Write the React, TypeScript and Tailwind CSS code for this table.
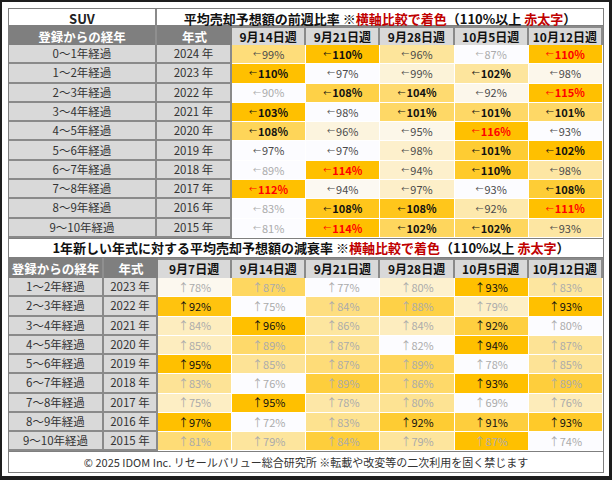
import React from "react";

type Row = { age: string; year: string; vals: number[]; red?: number[] };

const TOP_WEEKS = ["9月14日週", "9月21日週", "9月28日週", "10月5日週", "10月12日週"];
const BOTTOM_WEEKS = ["9月7日週", ...TOP_WEEKS];

const topRows: Row[] = [
  { age: "0～1年経過", year: "2024 年", vals: [99, 110, 96, 87, 110], red: [4] },
  { age: "1～2年経過", year: "2023 年", vals: [110, 97, 99, 102, 98] },
  { age: "2～3年経過", year: "2022 年", vals: [90, 108, 104, 92, 115], red: [4] },
  { age: "3～4年経過", year: "2021 年", vals: [103, 98, 101, 101, 101] },
  { age: "4～5年経過", year: "2020 年", vals: [108, 96, 95, 116, 93], red: [3] },
  { age: "5～6年経過", year: "2019 年", vals: [97, 97, 98, 101, 102] },
  { age: "6～7年経過", year: "2018 年", vals: [89, 114, 94, 110, 98], red: [1] },
  { age: "7～8年経過", year: "2017 年", vals: [112, 94, 97, 93, 108], red: [0] },
  { age: "8～9年経過", year: "2016 年", vals: [83, 108, 108, 92, 111], red: [4] },
  { age: "9～10年経過", year: "2015 年", vals: [81, 114, 102, 102, 93], red: [1] },
];

const bottomRows: Row[] = [
  { age: "1～2年経過", year: "2023 年", vals: [78, 87, 77, 80, 93, 83] },
  { age: "2～3年経過", year: "2022 年", vals: [92, 75, 84, 88, 79, 93] },
  { age: "3～4年経過", year: "2021 年", vals: [84, 96, 86, 84, 92, 80] },
  { age: "4～5年経過", year: "2020 年", vals: [85, 89, 87, 82, 94, 87] },
  { age: "5～6年経過", year: "2019 年", vals: [95, 85, 87, 89, 78, 85] },
  { age: "6～7年経過", year: "2018 年", vals: [83, 76, 89, 86, 93, 89] },
  { age: "7～8年経過", year: "2017 年", vals: [75, 95, 78, 80, 69, 76] },
  { age: "8～9年経過", year: "2016 年", vals: [97, 72, 83, 92, 91, 93] },
  { age: "9～10年経過", year: "2015 年", vals: [81, 79, 84, 79, 87, 74] },
];

// excel style 2-colour scale per row: min -> near white, max -> amber
const scaleColor = (v: number, vals: number[]) => {
  const min = Math.min(...vals);
  const max = Math.max(...vals);
  const t = max === min ? 0 : (v - min) / (max - min);
  const r = Math.round(252 + (255 - 252) * t);
  const g = Math.round(252 + (192 - 252) * t);
  const b = Math.round(255 + (0 - 255) * t);
  return `rgb(${r},${g},${b})`;
};

const Title = ({ main }: { main: string }) => (
  <span className="text-[13px] font-bold text-[#111]">
    {main} ※<span className="text-[#c00000]">横軸比較で着色</span>（110%以上{" "}
    <span className="text-[#c00000]">赤太字</span>）
  </span>
);

const HeadCells = ({ weeks }: { weeks: string[] }) => (
  <>
    <div className="flex items-center justify-center bg-[#7f7f7f] text-[12.5px] font-bold text-white border-r-2 border-[#8f8f8f]">
      登録からの経年
    </div>
    <div className="flex items-center justify-center bg-[#7f7f7f] text-[12.5px] font-bold text-white">
      年式
    </div>
    {weeks.map((w) => (
      <div
        key={w}
        className="flex items-center justify-center bg-[#d9d9d9] text-[12px] font-bold text-[#111] border-2 border-l-0 border-[#8a8a8a]"
      >
        {w}
      </div>
    ))}
  </>
);

const LabelCells = ({ row }: { row: Row }) => (
  <>
    <div className="flex items-center justify-center bg-[#d9d9d9] text-[11.5px] text-[#333] border-r-2 border-b-2 border-[#8a8a8a]">
      {row.age}
    </div>
    <div className="flex items-center justify-center bg-[#d9d9d9] text-[11.5px] text-[#333] border-r-2 border-b-2 border-[#8a8a8a]">
      {row.year}
    </div>
  </>
);

export default function App() {
  return (
    <div className="w-[612px] h-[480px] bg-white border-l-2 border-t-2 border-r-[3px] border-b-4 border-[#1e1e1e] pl-[6px] pt-[6px] font-[family-name:'Noto_Sans_CJK_JP','Noto_Sans',sans-serif]">
      <div className="w-[596px] h-[465px] flex flex-col border border-[#7f7f7f]">
        {/* top table */}
        <div className="grid grid-cols-[148px_1fr] h-[17px] border-b border-[#7f7f7f]">
          <div className="flex items-center justify-center text-[13px] font-semibold text-[#222] border-r-2 border-[#8a8a8a]">
            SUV
          </div>
          <div className="flex items-center justify-center">
            <Title main="平均売却予想額の前週比率" />
          </div>
        </div>
        <div className="grid grid-cols-[148px_75px_repeat(5,minmax(0,1fr))] h-[19px]">
          <HeadCells weeks={TOP_WEEKS} />
        </div>
        <div className="flex flex-col h-[193px]">
          {topRows.map((row) => (
            <div
              key={row.age}
              className="grid grid-cols-[148px_75px_repeat(5,minmax(0,1fr))] flex-1"
            >
              <LabelCells row={row} />
              {row.vals.map((v, i) => {
                const isRed = row.red?.includes(i);
                const cls = isRed
                  ? "font-bold text-[#ff0000]"
                  : v >= 100
                  ? "font-bold text-[#111]"
                  : v > 90
                  ? "text-[#4a4a4a]"
                  : "text-[#ababab]";
                return (
                  <div
                    key={i}
                    className={`flex items-center justify-center text-[11px] border-r border-b border-white ${cls}`}
                    style={{ backgroundColor: scaleColor(v, row.vals) }}
                  >
                    <span className="text-[8px] font-normal mr-px">←</span>
                    {v}%
                  </div>
                );
              })}
            </div>
          ))}
        </div>

        {/* bottom table */}
        <div className="flex items-center justify-center h-[20px] border-y border-[#7f7f7f] pl-[10px]">
          <Title main="1年新しい年式に対する平均売却予想額の減衰率" />
        </div>
        <div className="grid grid-cols-[95px_54px_repeat(6,minmax(0,1fr))] h-[20px]">
          <HeadCells weeks={BOTTOM_WEEKS} />
        </div>
        <div className="flex flex-col h-[173px]">
          {bottomRows.map((row) => (
            <div
              key={row.age}
              className="grid grid-cols-[95px_54px_repeat(6,minmax(0,1fr))] flex-1"
            >
              <LabelCells row={row} />
              {row.vals.map((v, i) => (
                <div
                  key={i}
                  className={`flex items-center justify-center text-[11px] border-r border-b border-white ${
                    v >= 90 ? "text-[#111]" : "text-[#ababab]"
                  }`}
                  style={{ backgroundColor: scaleColor(v, row.vals) }}
                >
                  ↑{v}%
                </div>
              ))}
            </div>
          ))}
        </div>

        <div className="flex-1 flex items-center justify-center border-t border-[#7f7f7f] text-[11px] text-[#333]">
          © 2025 IDOM Inc. リセールバリュー総合研究所 ※転載や改変等の二次利用を固く禁じます
        </div>
      </div>
    </div>
  );
}
